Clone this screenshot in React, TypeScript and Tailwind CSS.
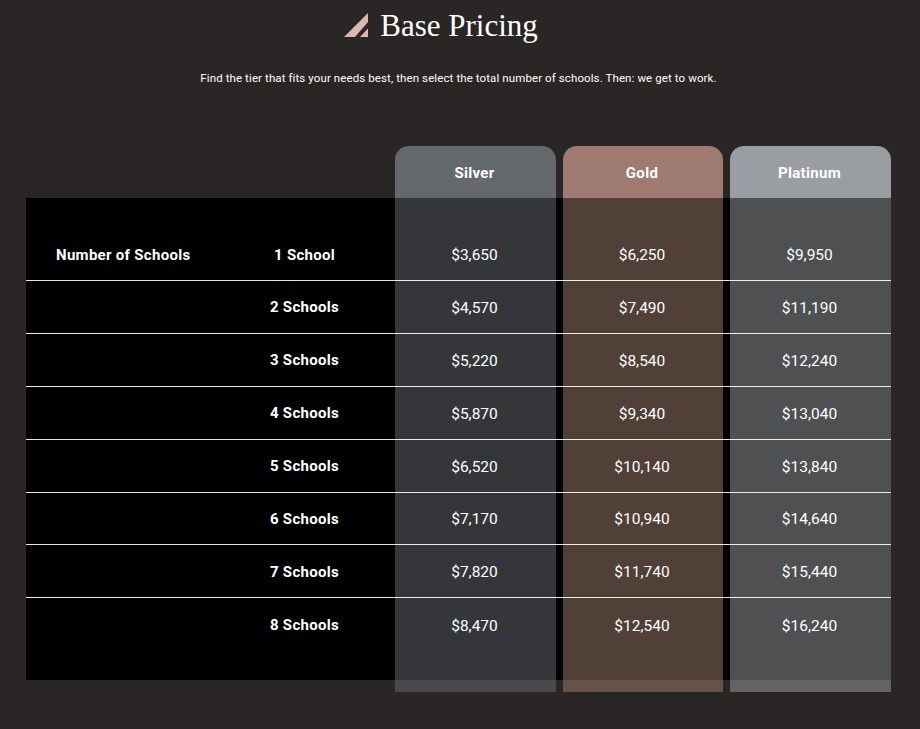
const rows = [
  { label: "1 School", silver: "$3,650", gold: "$6,250", platinum: "$9,950" },
  { label: "2 Schools", silver: "$4,570", gold: "$7,490", platinum: "$11,190" },
  { label: "3 Schools", silver: "$5,220", gold: "$8,540", platinum: "$12,240" },
  { label: "4 Schools", silver: "$5,870", gold: "$9,340", platinum: "$13,040" },
  { label: "5 Schools", silver: "$6,520", gold: "$10,140", platinum: "$13,840" },
  { label: "6 Schools", silver: "$7,170", gold: "$10,940", platinum: "$14,640" },
  { label: "7 Schools", silver: "$7,820", gold: "$11,740", platinum: "$15,440" },
  { label: "8 Schools", silver: "$8,470", gold: "$12,540", platinum: "$16,240" },
];

const Logo = () => (
  <svg width="24" height="24" viewBox="0 0 24 24" className="mr-[12px]">
    <polygon points="0,24 24,0 24,9 11,24" fill="#dcb8b1" />
    <polygon points="16,24 24,24 24,15.5" fill="#dcb8b1" />
  </svg>
);

export default function App() {
  return (
    <div className="min-h-[729px] bg-[#2a2625] text-white font-['Roboto',sans-serif] overflow-hidden">
      <div className="h-[50px] flex items-center justify-center pr-[38px]">
        <Logo />
        <h1 className="text-[31px] leading-[50px] pt-[1px] font-['Liberation_Serif',serif] text-white">Base Pricing</h1>
      </div>
      <p className="mt-[20px] text-center text-[11.5px] leading-[16px] tracking-[0.1px] pr-[3px]">
        Find the tier that fits your needs best, then select the total number of schools. Then: we get to work.
      </p>

      <div className="relative mt-[60px] ml-[26px] w-[865px] h-[546px]">
        <div className="flex justify-end gap-[7px] h-[52px] font-bold text-[15px] tracking-[0.3px]">
          <div className="w-[161px] rounded-t-[14px] bg-[#65686c] flex items-center justify-center pr-[2px] pt-[3px]">Silver</div>
          <div className="w-[160px] rounded-t-[14px] bg-[#9e7a70] flex items-center justify-center pr-[2px] pt-[3px]">Gold</div>
          <div className="w-[161px] rounded-t-[14px] bg-[#9a9ea2] flex items-center justify-center pr-[2px] pt-[3px]">Platinum</div>
        </div>

        <div className="bg-black h-[482px]" />

        {/* tinted columns sit on top of the black table */}
        <div className="absolute left-[369px] top-[52px] w-[161px] h-[494px] bg-[#686b72]/50" />
        <div className="absolute left-[537px] top-[52px] w-[160px] h-[494px] bg-[#a0806f]/50" />
        <div className="absolute left-[704px] top-[52px] w-[161px] h-[494px] bg-[#9da0a2]/50" />

        {/* rows stay bright above the tint */}
        <div className="absolute left-0 right-0 top-[82.4px]">
          {rows.map((row, i) => (
            <div key={row.label} className={`h-[52.85px] flex items-center text-[15.5px] ${i < 7 ? "border-b border-white/90" : ""}`}>
              <div className="w-[197px] pl-[30px] font-bold text-[15px] tracking-[0.3px] pt-[1px]">{i === 0 ? "Number of Schools" : ""}</div>
              <div className="w-[172px] text-center font-bold text-[15px] tracking-[0.3px] pr-[9px] pt-[1px]">{row.label}</div>
              <div className="w-[161px] text-center pr-[2px] pt-[3px]">{row.silver}</div>
              <div className="w-[7px]" />
              <div className="w-[160px] text-center pr-[2px] pt-[3px]">{row.gold}</div>
              <div className="w-[7px]" />
              <div className="w-[161px] text-center pr-[2px] pt-[3px]">{row.platinum}</div>
            </div>
          ))}
        </div>
      </div>
    </div>
  );
}
